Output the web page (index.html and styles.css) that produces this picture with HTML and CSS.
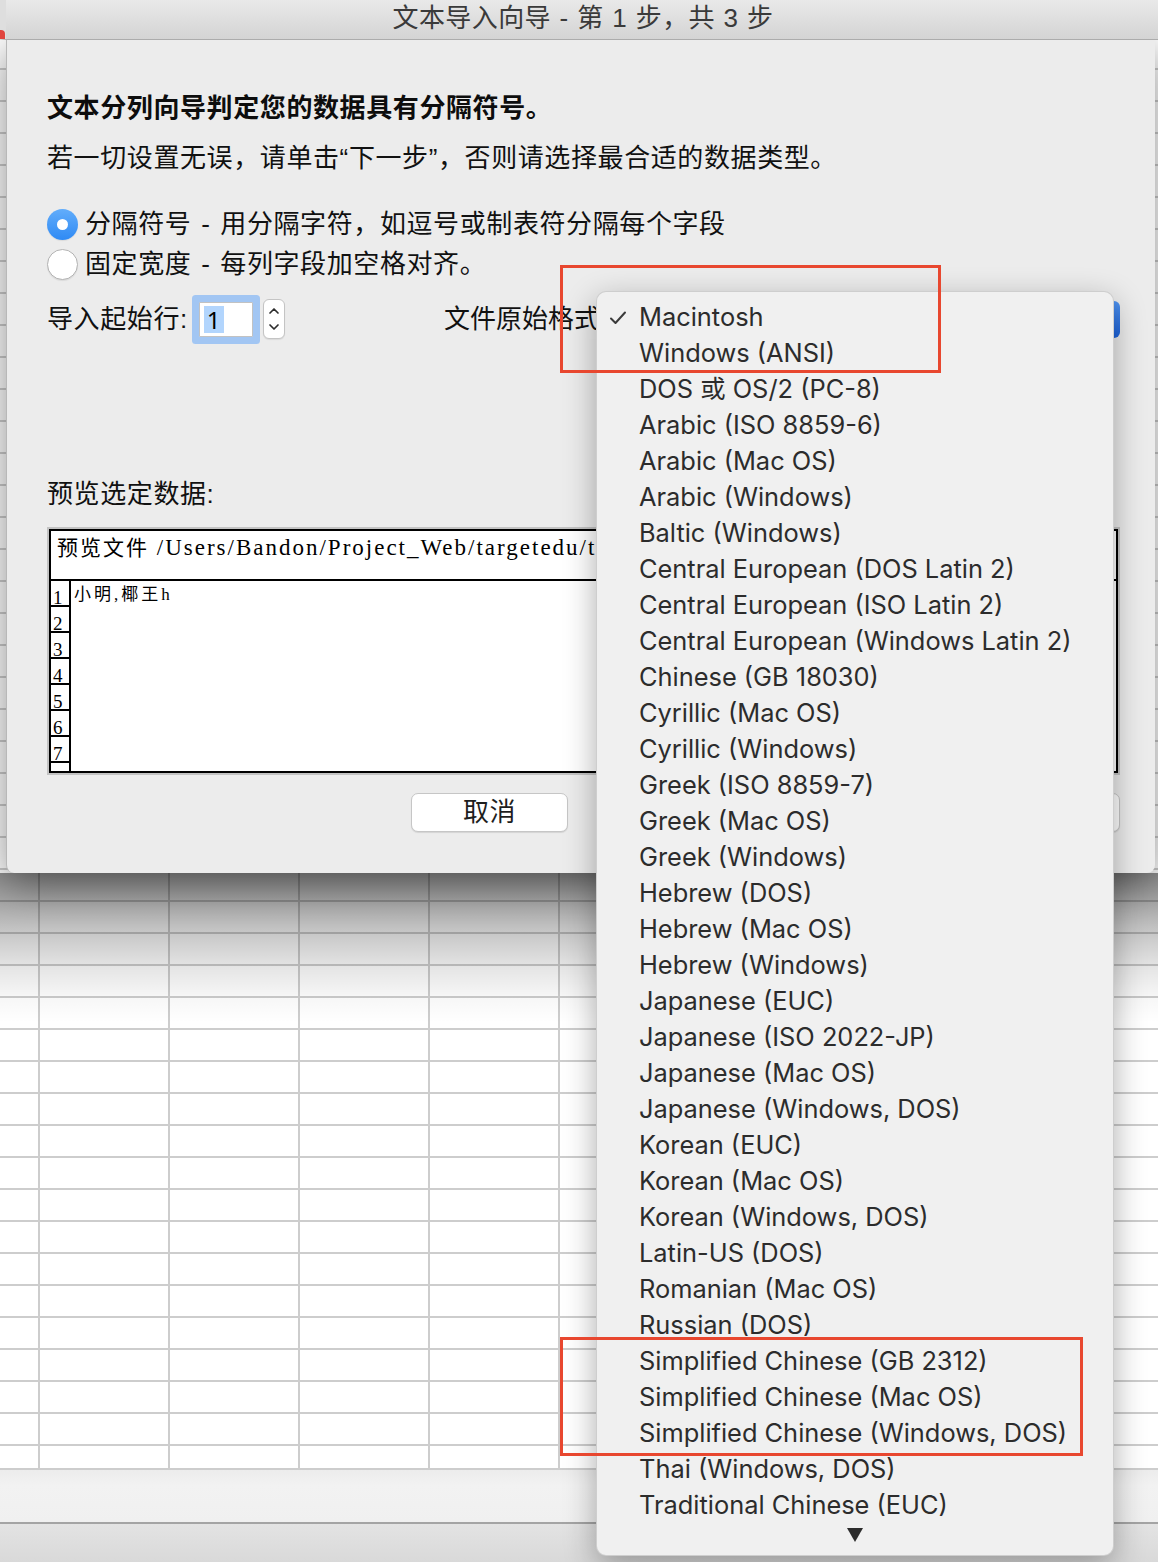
FILE: index.html
```html
<!DOCTYPE html>
<html lang="zh-CN">
<head>
<meta charset="utf-8">
<title>文本导入向导</title>
<link rel="stylesheet" href="styles.css">
</head>
<body>
<div class="screen">
  <div class="sheet">
    <div class="grid"></div>
    <div class="tabs"></div>
    <div class="status"></div>
  </div>

  <div class="window">
    <div class="titlebar">
      <span class="close-dot"></span>
      <div class="title">文本导入向导 - 第 1 步，共 3 步</div>
    </div>
    <div class="dialog">
      <p class="heading">文本分列向导判定您的数据具有分隔符号。</p>
      <p class="line">若一切设置无误，请单击<span class="q">“</span>下一步<span class="q">”</span>，否则请选择最合适的数据类型。</p>

      <div class="radios">
        <div class="radio-row"><span class="radio on"></span><span>分隔符号 - 用分隔字符，如逗号或制表符分隔每个字段</span></div>
        <div class="radio-row"><span class="radio"></span><span>固定宽度 - 每列字段加空格对齐。</span></div>
      </div>

      <div class="import-row">
        <div class="start-group">
          <span>导入起始行:</span>
          <span class="field"><span class="sel">1</span></span>
          <span class="stepper">
            <svg width="22" height="40" viewBox="0 0 22 40"><path d="M7 14 L11 10 L15 14" fill="none" stroke="#2d2d2d" stroke-width="1.7" stroke-linecap="round" stroke-linejoin="round"/><path d="M7 26 L11 30 L15 26" fill="none" stroke="#2d2d2d" stroke-width="1.7" stroke-linecap="round" stroke-linejoin="round"/></svg>
          </span>
        </div>
        <span class="fmt-label">文件原始格式</span>
        <span class="popup-btn"></span>
      </div>

      <p class="line preview-label">预览选定数据:</p>

      <div class="preview">
        <div class="pv-inner">
          <div class="pv-head"><span class="pv-cjk">预览文件</span> /Users/Bandon/Project_Web/targetedu/test.csv</div>
          <div class="pv-rows">
            <div class="pv-row"><span class="num">1</span><span class="cell">小明,椰王h</span></div>
            <div class="pv-row"><span class="num">2</span><span class="cell"></span></div>
            <div class="pv-row"><span class="num">3</span><span class="cell"></span></div>
            <div class="pv-row"><span class="num">4</span><span class="cell"></span></div>
            <div class="pv-row"><span class="num">5</span><span class="cell"></span></div>
            <div class="pv-row"><span class="num">6</span><span class="cell"></span></div>
            <div class="pv-row"><span class="num">7</span><span class="cell"></span></div>
            <div class="pv-row"><span class="num"></span><span class="cell"></span></div>
          </div>
        </div>
      </div>

      <div class="buttons">
        <span class="btn cancel">取消</span>
        <span class="btn hidden-btn"></span>
        <span class="btn hidden-btn"></span>
        <span class="btn hidden-btn last"></span>
      </div>
    </div>
  </div>

  <div class="menu">
    <ul class="items">
      <li class="checked"><svg class="check" width="18" height="16" viewBox="0 0 18 16"><path d="M2 8.5 L6.5 13 L16 2.5" fill="none" stroke="#3a3a3a" stroke-width="2" stroke-linecap="round" stroke-linejoin="round"/></svg>Macintosh</li>
      <li>Windows (ANSI)</li>
      <li>DOS 或 OS/2 (PC-8)</li>
      <li>Arabic (ISO 8859-6)</li>
      <li>Arabic (Mac OS)</li>
      <li>Arabic (Windows)</li>
      <li>Baltic (Windows)</li>
      <li>Central European (DOS Latin 2)</li>
      <li>Central European (ISO Latin 2)</li>
      <li>Central European (Windows Latin 2)</li>
      <li>Chinese (GB 18030)</li>
      <li>Cyrillic (Mac OS)</li>
      <li>Cyrillic (Windows)</li>
      <li>Greek (ISO 8859-7)</li>
      <li>Greek (Mac OS)</li>
      <li>Greek (Windows)</li>
      <li>Hebrew (DOS)</li>
      <li>Hebrew (Mac OS)</li>
      <li>Hebrew (Windows)</li>
      <li>Japanese (EUC)</li>
      <li>Japanese (ISO 2022-JP)</li>
      <li>Japanese (Mac OS)</li>
      <li>Japanese (Windows, DOS)</li>
      <li>Korean (EUC)</li>
      <li>Korean (Mac OS)</li>
      <li>Korean (Windows, DOS)</li>
      <li>Latin-US (DOS)</li>
      <li>Romanian (Mac OS)</li>
      <li>Russian (DOS)</li>
      <li>Simplified Chinese (GB 2312)</li>
      <li>Simplified Chinese (Mac OS)</li>
      <li>Simplified Chinese (Windows, DOS)</li>
      <li>Thai (Windows, DOS)</li>
      <li>Traditional Chinese (EUC)</li>
    </ul>
    <div class="more"><span class="tri"></span></div>
  </div>

  <div class="mark mark-top"></div>
  <div class="mark mark-bottom"></div>
</div>
</body>
</html>
```

FILE: styles.css
```css
* { box-sizing: border-box; }
html, body { margin: 0; padding: 0; }
body {
  width: 1158px;
  height: 1562px;
  overflow: hidden;
  font-family: "Liberation Sans", "Noto Sans CJK SC", sans-serif;
  color: #111;
}
p { margin: 0; }

.screen {
  position: relative;
  width: 1158px;
  height: 1562px;
  overflow: hidden;
}

/* spreadsheet behind */
.sheet { display: flex; flex-direction: column; width: 1158px; height: 1562px; }
.grid {
  height: 1470px;
  background-color: #fff;
  background-image:
    linear-gradient(to right, transparent 38px, #cdcdcd 38px, #cdcdcd 40px, transparent 40px),
    linear-gradient(to bottom, transparent 4px, #cdcdcd 4px, #cdcdcd 6px, transparent 6px);
  background-size: 130px 100%, 100% 32px;
  border-bottom: 2px solid #cdcdcd;
}
.tabs {
  height: 52px;
  background: linear-gradient(#ececec, #f2f2f2 30%, #f0f0f0);
}
.status {
  flex: 1;
  border-top: 2px solid #a4a4a4;
  background: linear-gradient(#e3e3e3, #d9d9d9);
}

/* wizard window */
.window {
  position: absolute;
  left: 0;
  top: 0;
  width: 1158px;
}
.titlebar {
  position: relative;
  z-index: 2;
  height: 40px;
  background: linear-gradient(#e9e9e9, #d4d4d4);
  border-bottom: 1px solid #acacac;
  border-left: 6px solid #dedede;
}
.close-dot {
  position: absolute;
  left: -6px;
  top: 30px;
  width: 5px;
  height: 9px;
  background: #e0443e;
  border-radius: 0 4px 0 0;
}
.title {
  text-align: center;
  font-size: 26px;
  line-height: 36px;
  color: #3a3a3a;
  padding-left: 2px;
  letter-spacing: 0.4px;
  word-spacing: 1px;
}
.dialog {
  position: relative;
  z-index: 1;
  margin-left: 6px;
  width: 1149px;
  height: 833px;
  padding: 50px 35px 0 40px;
  background: #ececec;
  border-left: 1px solid #b8b8b8;
  border-bottom-left-radius: 8px;
  border-bottom-right-radius: 8px;
  box-shadow: 0 10px 40px rgba(0, 0, 0, 0.45);
  font-size: 26px;
  letter-spacing: 0.6px;
  word-spacing: 2px;
}
/* drop shadow cast onto the sheet below the dialog */
.dialog::after {
  content: "";
  position: absolute;
  left: -8px;
  right: -8px;
  top: 100%;
  height: 150px;
  background: linear-gradient(rgba(0,0,0,0.44), rgba(0,0,0,0.36) 25px, rgba(0,0,0,0.22) 60px, rgba(0,0,0,0.1) 95px, rgba(0,0,0,0.03) 125px, rgba(0,0,0,0));
  pointer-events: none;
}
.heading { font-weight: 700; line-height: 36px; color: #0d0d0d; }
.line { line-height: 36px; margin-top: 14px; }
.q { font-family: "Liberation Sans", sans-serif; }

.radios { margin-top: 28px; }
.radio-row { display: flex; align-items: center; height: 40px; line-height: 36px; }
.radio {
  width: 31px;
  height: 31px;
  border-radius: 50%;
  margin-right: 7px;
  flex: none;
  background: #fff;
  border: 1px solid #b3b3b3;
  box-shadow: 0 1px 1px rgba(0,0,0,0.08);
  display: flex;
  align-items: center;
  justify-content: center;
}
.radio.on {
  border: none;
  background: linear-gradient(#62adfb, #2f8af4);
}
.radio.on::after {
  content: "";
  width: 11px;
  height: 11px;
  border-radius: 50%;
  background: #fff;
}

.import-row {
  margin-top: 10px;
  height: 50px;
  display: flex;
  align-items: center;
  line-height: 36px;
}
.start-group { width: 397px; display: flex; align-items: center; flex: none; }
.field {
  margin-left: 11px;
  width: 54px;
  height: 35px;
  background: #fff;
  border: 1px solid #c2c2c2;
  box-shadow: 0 0 0 7px #a2c6f3;
  border-radius: 1px;
  display: flex;
  align-items: center;
  padding-left: 4px;
  font-family: "Noto Sans", sans-serif;
  font-size: 24px;
  letter-spacing: 0;
}
.sel {
  background: #b2d5fd;
  height: 27px;
  line-height: 27px;
  padding: 0 3px;
  color: #000;
}
.stepper {
  margin-left: 10px;
  width: 22px;
  height: 40px;
  background: #fff;
  border: 1px solid #c4c4c4;
  border-radius: 6px;
  display: flex;
  align-items: center;
  justify-content: center;
  box-shadow: 0 1px 1px rgba(0,0,0,0.08);
}
.stepper svg { display: block; flex: none; }
.fmt-label { flex: none; letter-spacing: 0; }
.popup-btn {
  flex: 1;
  height: 37px;
  margin-left: 6px;
  border-radius: 6px;
  background: linear-gradient(#4f93f0, #1c63dd);
}

.preview-label { margin-top: 132px; }

.preview {
  margin-top: 15px;
  height: 248px;
  border: 2px solid #c3c3c3;
}
.pv-inner {
  height: 100%;
  border: 2px solid #000;
  background: #fff;
  overflow: hidden;
}
.pv-head {
  height: 50px;
  border-bottom: 2px solid #000;
  padding: 1px 0 0 6px;
  font-family: "Liberation Serif", "Noto Sans CJK SC", serif;
  font-size: 23px;
  line-height: 28px;
  letter-spacing: 2px;
  word-spacing: 0;
  white-space: nowrap;
  overflow: hidden;
  color: #000;
}
.pv-cjk { font-family: "Noto Sans CJK SC", sans-serif; font-size: 21px; }
.pv-rows { display: flex; flex-direction: column; }
.pv-row { display: flex; height: 26px; flex: none; }
.num {
  width: 20px;
  height: 26px;
  border-right: 2px solid #000;
  border-bottom: 2px solid #000;
  display: flex;
  align-items: flex-end;
  padding-left: 2px;
  font-family: "Liberation Serif", serif;
  font-size: 19px;
  line-height: 14px;
  letter-spacing: 0;
  color: #000;
}
.cell {
  padding-left: 3px;
  display: flex;
  align-items: flex-end;
  font-family: "Liberation Serif", "Noto Sans CJK SC", serif;
  font-size: 17px;
  line-height: 20px;
  letter-spacing: 3px;
  padding-bottom: 2px;
  color: #000;
}

.buttons {
  margin-top: 18px;
  display: flex;
  gap: 22px;
}
.btn {
  width: 157px;
  height: 39px;
  background: #fff;
  border: 1px solid #c6c6c6;
  border-radius: 7px;
  box-shadow: 0 1px 1px rgba(0,0,0,0.1);
  text-align: center;
  line-height: 36px;
  font-size: 26px;
  color: #1e1e1e;
}
.btn.cancel { margin-left: 364px; }
.hidden-btn { width: 140px; }
.hidden-btn:nth-child(2) { margin-left: 20px; }
.btn.last { margin-left: auto; }

/* popup menu */
.menu {
  position: absolute;
  z-index: 5;
  left: 596px;
  top: 291px;
  width: 518px;
  height: 1265px;
  background: #f0f0f0;
  border: 1px solid rgba(0,0,0,0.14);
  border-radius: 10px;
  box-shadow: 0 10px 32px rgba(0,0,0,0.32);
  padding-top: 7px;
  font-family: "Inter", "Noto Sans", "Noto Sans CJK SC", sans-serif;
  font-size: 25.4px;
  color: #2c2c2c;
}
.items { list-style: none; margin: 0; padding: 0; }
.items li {
  position: relative;
  height: 36px;
  line-height: 36px;
  padding-left: 42px;
  white-space: nowrap;
}
.check { position: absolute; left: 12px; top: 11px; }
.more { height: 33px; display: flex; justify-content: center; padding-top: 5px; }
.tri {
  width: 0;
  height: 0;
  border-left: 8px solid transparent;
  border-right: 8px solid transparent;
  border-top: 14px solid #2c2c2c;
}

/* red annotation boxes */
.mark {
  position: absolute;
  z-index: 6;
  border: 3px solid #e8472f;
}
.mark-top { left: 560px; top: 265px; width: 381px; height: 108px; }
.mark-bottom { left: 560px; top: 1337px; width: 523px; height: 119px; }
```
